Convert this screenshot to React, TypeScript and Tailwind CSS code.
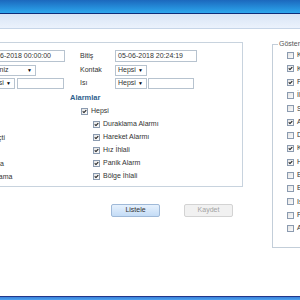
import React from 'react'

// Small square checkbox, drawn like the old XP style control
const Box = ({ checked }: { checked?: boolean }) => (
  <span className="w-[7px] h-[7px] shrink-0 border border-[#8b9bb0] bg-gradient-to-br from-[#e4e4e4] to-[#fbfbfb] flex items-center justify-center">
    {checked && (
      <svg width="7" height="7" viewBox="0 0 7 7" className="block">
        <path d="M1 3.2 L2.8 5 L6 1.6" stroke="#1c1c1c" strokeWidth="1.5" fill="none" />
      </svg>
    )}
  </span>
)

const Select = ({ value, className }: { value: string; className: string }) => (
  <div className={`h-full border border-[#b7c3cf] bg-white flex items-center justify-between pl-[2px] pr-[3px] ${className}`}>
    <span>{value}</span>
    <span className="text-[5px] text-black">▼</span>
  </div>
)

const TextBox = ({ value, className }: { value?: string; className: string }) => (
  <div className={`h-full border border-[#b7c3cf] bg-white flex items-center pl-[2px] ${className}`}>
    {value}
  </div>
)

const subAlarms = ['Duraklama Alarmı', 'Hareket Alarmı', 'Hız İhlali', 'Panik Alarm', 'Bölge İhlali']
const leftTexts = ['', 'Rölanti', 'Sınırı Geçti', 'Park', 'Kapı Açma', 'Kapı Kapama']

const columns = [
  { name: 'Kayıt No', on: false },
  { name: 'Konum', on: true },
  { name: 'Filo', on: true },
  { name: 'İl', on: false },
  { name: 'Sürücü', on: false },
  { name: 'Adres', on: true },
  { name: 'Durum', on: false },
  { name: 'Kontak', on: true },
  { name: 'Hız', on: true },
  { name: 'Enlem', on: false },
  { name: 'Ek Bilgi', on: false },
  { name: 'Isı', on: false },
  { name: 'Filo No', on: false },
  { name: 'Alarm', on: false },
]

export default function App() {
  return (
    <div className="w-[300px] h-[300px] overflow-hidden flex flex-col bg-white font-['Liberation_Sans',Arial,sans-serif] text-[7px] text-[#333]">
      {/* title bar */}
      <div className="h-[13px] shrink-0 bg-gradient-to-b from-[#1c68bd] to-[#2ea8ee]" />
      <div className="h-[1px] shrink-0 bg-[#0f2d78]" />
      <div className="h-[15px] shrink-0 bg-gradient-to-b from-[#d9e5f5] to-[#ebf2fc] border-b border-[#c6d5e8]" />

      <div className="flex-1 flex overflow-hidden">
        {/* filter area */}
        <div className="w-[313px] shrink-0 ml-[-70px]">
          <div className="mt-[13px] border border-[#c8d3de] pt-[7px] pl-[17px] pb-[3px]">
            <div className="flex items-center h-[12px]">
              <span className="w-[35px] whitespace-nowrap overflow-hidden">Başlangıç</span>
              <div className="w-[97px] h-full">
                <TextBox value="05-06-2018 00:00:00" className="w-[82px]" />
              </div>
              <span className="w-[35px]">Bitiş</span>
              <TextBox value="05-06-2018 20:24:19" className="w-[82px]" />
            </div>
            <div className="flex items-center h-[11px] mt-[3px]">
              <span className="w-[35px]">Grup</span>
              <div className="w-[97px] h-full">
                <Select value="Seçiniz" className="w-[53px]" />
              </div>
              <span className="w-[35px]">Kontak</span>
              <Select value="Hepsi" className="w-[32px]" />
            </div>
            <div className="flex items-center h-[11px] mt-[2px]">
              <span className="w-[35px]">Hız</span>
              <div className="w-[97px] h-full flex gap-[2px]">
                <Select value="Hepsi" className="w-[32px]" />
                <TextBox className="w-[47px]" />
              </div>
              <span className="w-[35px]">Isı</span>
              <div className="h-full flex gap-[1px]">
                <Select value="Hepsi" className="w-[32px]" />
                <TextBox className="w-[46px]" />
              </div>
            </div>

            <div className="flex mt-[3px]">
              <div className="w-[122px] pl-[22px] pt-[13px] whitespace-nowrap">
                {leftTexts.map((t, i) => (
                  <div key={i} className="h-[13px] leading-[13px]">{t}</div>
                ))}
              </div>
              <div>
                <div className="h-[11px] leading-[11px] font-bold text-[7.5px] text-[#2f5f8e]">Alarmlar</div>
                <div className="h-[13px] mt-[2px] pl-[11px] flex items-center gap-[3px]">
                  <Box checked />
                  <span>Hepsi</span>
                </div>
                {subAlarms.map((a) => (
                  <div key={a} className="h-[13px] pl-[23px] flex items-center gap-[3px]">
                    <Box checked />
                    <span>{a}</span>
                  </div>
                ))}
              </div>
            </div>
          </div>

          <div className="flex gap-[24px] pl-[181px] mt-[17px]">
            <button className="w-[49px] h-[13px] rounded-[2px] border border-[#9fb9d8] bg-gradient-to-b from-[#e6f1fd] to-[#c4dcf6] text-[7px] text-[#333]">
              Listele
            </button>
            <button className="w-[49px] h-[13px] rounded-[2px] border border-[#d3d3d3] bg-[#f1f1f1] text-[7px] text-[#a3a3a3]">
              Kaydet
            </button>
          </div>
        </div>

        {/* visible columns */}
        <fieldset className="w-[80px] shrink-0 ml-[29px] mt-[10px] self-start border border-[#c3ced9] pb-[12px]">
          <legend className="ml-[5px] px-[1px] leading-[10px] text-[#555] whitespace-nowrap">Gösterilecek Alanlar</legend>
          <div className="pl-[14px]">
            {columns.map((c) => (
              <div key={c.name} className="h-[13.3px] flex items-center gap-[3px] whitespace-nowrap">
                <Box checked={c.on} />
                <span>{c.name}</span>
              </div>
            ))}
          </div>
        </fieldset>
      </div>

      {/* task bar */}
      <div className="h-[4px] shrink-0 border-t border-[#23378a] bg-gradient-to-b from-[#3a80d9] to-[#4da3f0]" />
    </div>
  )
}
